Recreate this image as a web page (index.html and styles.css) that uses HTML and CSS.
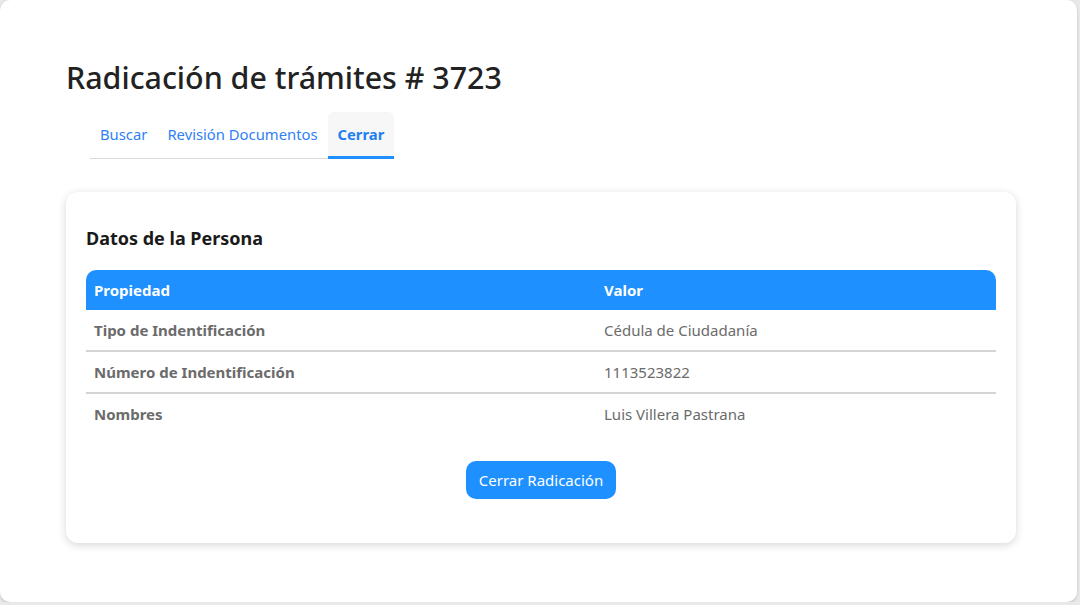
FILE: index.html
```html
<!DOCTYPE html>
<html lang="es">
<head>
  <meta charset="UTF-8">
  <meta name="viewport" content="width=device-width, initial-scale=1.0">
  <title>Radicación de trámites</title>
  <link rel="stylesheet" href="styles.css">
</head>
<body>
  <div class="panel">
    <h1>Radicación de trámites # 3723</h1>

    <ul class="tabs">
      <li><a href="#">Buscar</a></li>
      <li><a href="#">Revisión Documentos</a></li>
      <li class="active"><a href="#">Cerrar</a></li>
    </ul>

    <div class="card">
      <h2>Datos de la Persona</h2>
      <table class="datos">
        <thead>
          <tr>
            <th>Propiedad</th>
            <th>Valor</th>
          </tr>
        </thead>
        <tbody>
          <tr>
            <td class="prop">Tipo de Indentificación</td>
            <td>Cédula de Ciudadanía</td>
          </tr>
          <tr>
            <td class="prop">Número de Indentificación</td>
            <td>1113523822</td>
          </tr>
          <tr>
            <td class="prop">Nombres</td>
            <td>Luis Villera Pastrana</td>
          </tr>
        </tbody>
      </table>
      <div class="acciones">
        <button class="btn">Cerrar Radicación</button>
      </div>
    </div>
  </div>
</body>
</html>
```

FILE: styles.css
```css
body {
  margin: 0;
  background: #e9e9e9;
  font-family: "Noto Sans", "Open Sans", sans-serif;
}
.panel {
  width: 1077px;
  height: 602px;
  box-sizing: border-box;
  background: #fff;
  border-radius: 10px;
  box-shadow: 0 1px 3px rgba(0, 0, 0, 0.18);
  padding: 56px 61px 0 66px;
}
h1 {
  margin: 0 0 12px;
  font-size: 30.4px;
  font-weight: 500;
  color: #222;
  line-height: 44px;
}
.tabs {
  list-style: none;
  margin: 0 0 33px 24px;
  padding: 0;
  display: inline-flex;
  white-space: nowrap;
  border-bottom: 1px solid #d9d9d9;
}
.tabs li a {
  display: block;
  padding: 0 10px;
  height: 44px;
  line-height: 44px;
  font-size: 14.8px;
  color: #2f7ff5;
  text-decoration: none;
  border-bottom: 3px solid transparent;
  margin-bottom: -1px;
}
.tabs li.active a {
  background: #f7f7f7;
  border-radius: 6px 6px 0 0;
  border-bottom-color: #1e90ff;
  font-weight: 700;
  color: #1e7ff0;
}
.card {
  background: #fff;
  border-radius: 12px;
  box-shadow: 0 2px 8px rgba(0, 0, 0, 0.16);
  padding: 20px 20px 44px;
}
h2 {
  margin: 14px 0 20px;
  font-size: 18px;
  font-weight: 700;
  color: #1a1a1a;
  line-height: 24px;
}
.datos {
  width: 100%;
  border-collapse: separate;
  border-spacing: 0;
  font-size: 15px;
}
.datos th {
  background: #1e90ff;
  color: #fff;
  text-align: left;
  font-weight: 700;
  height: 40px;
  padding: 0 8px;
}
.datos th:first-child {
  width: 494px;
  border-top-left-radius: 10px;
}
.datos th:last-child {
  border-top-right-radius: 10px;
}
.datos td {
  height: 40px;
  padding: 0 8px;
  color: #6b6b6b;
  border-bottom: 2px solid #d4d4d4;
}
.datos tr:last-child td {
  border-bottom: none;
}
.datos td.prop {
  font-weight: 700;
}
.acciones {
  text-align: center;
  margin-top: 27px;
}
.btn {
  background: #1e90ff;
  color: #fff;
  border: none;
  border-radius: 10px;
  height: 38px;
  padding: 0 13px;
  font-family: inherit;
  font-size: 15px;
  cursor: pointer;
}
```
